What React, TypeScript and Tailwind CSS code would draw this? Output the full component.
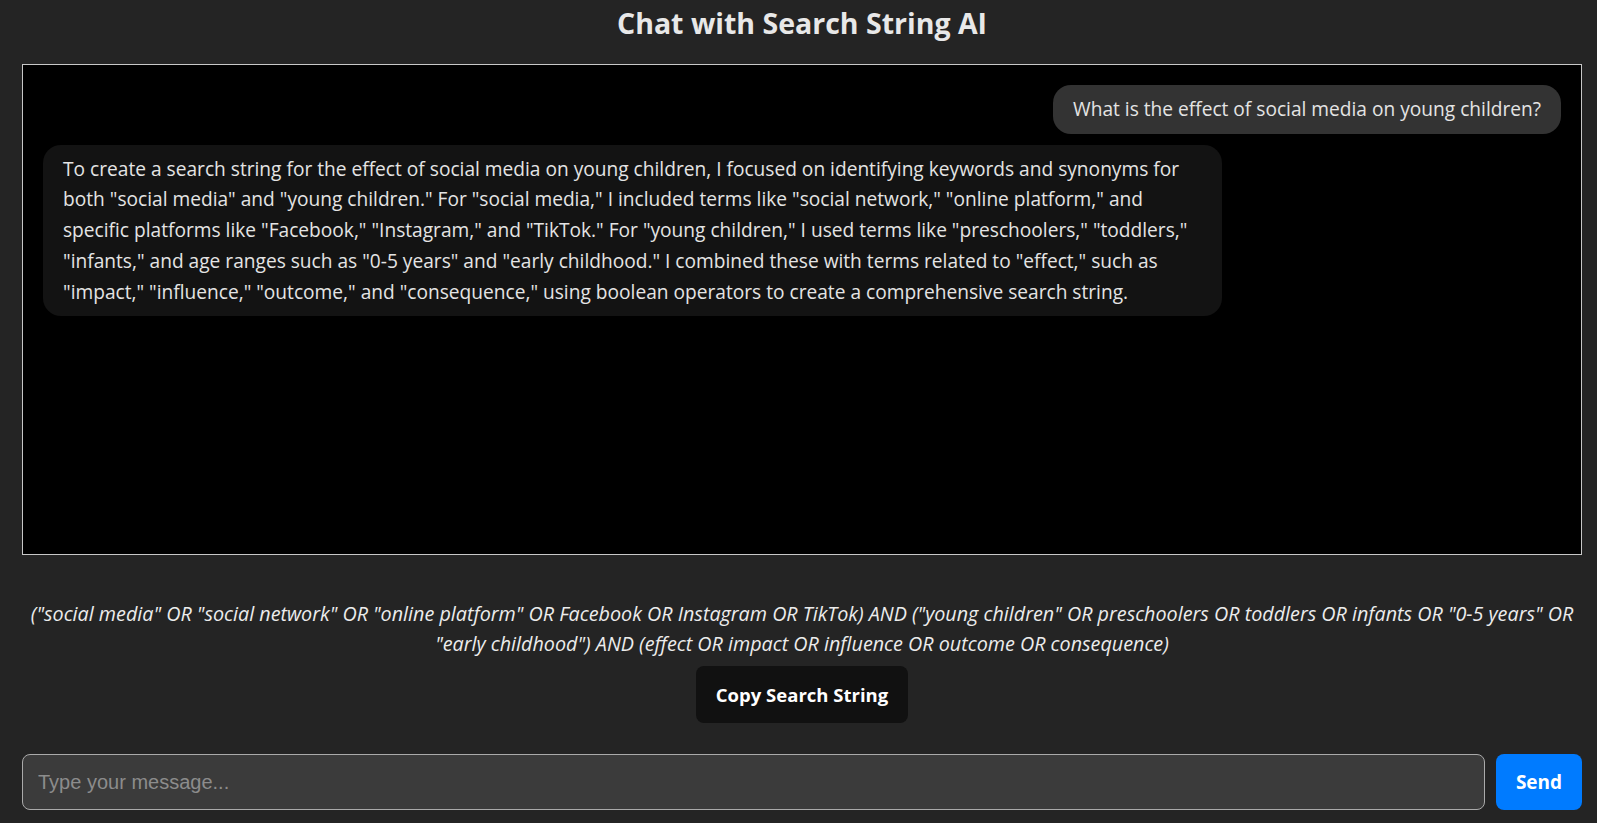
import React, { useState } from 'react';

const USER_MSG = 'What is the effect of social media on young children?';

const BOT_MSG =
  'To create a search string for the effect of social media on young children, I focused on identifying keywords and synonyms for both "social media" and "young children." For "social media," I included terms like "social network," "online platform," and specific platforms like "Facebook," "Instagram," and "TikTok." For "young children," I used terms like "preschoolers," "toddlers," "infants," and age ranges such as "0-5 years" and "early childhood." I combined these with terms related to "effect," such as "impact," "influence," "outcome," and "consequence," using boolean operators to create a comprehensive search string.';

const SEARCH_STRING =
  '("social media" OR "social network" OR "online platform" OR Facebook OR Instagram OR TikTok) AND ("young children" OR preschoolers OR toddlers OR infants OR "0-5 years" OR "early childhood") AND (effect OR impact OR influence OR outcome OR consequence)';

type Message = { role: 'user' | 'assistant'; text: string };

const App: React.FC = () => {
  const [input, setInput] = useState('');
  const [messages] = useState<Message[]>([
    { role: 'user', text: USER_MSG },
    { role: 'assistant', text: BOT_MSG },
  ]);

  return (
    <div className="min-h-screen bg-[#242424] text-[rgba(255,255,255,0.87)] font-['Open_Sans',sans-serif]">
      <div className="ml-[22px] mr-[15px] flex flex-col pt-[5px]">
        <h1 className="mb-[23px] text-center text-[28.5px] font-bold leading-[36px] text-[#e8e8e8]">
          Chat with Search String AI
        </h1>

        {/* Chat window */}
        <div className="flex h-[491px] flex-col gap-[11px] overflow-y-auto border border-[#c8c8c8] bg-black p-5">
          {messages.map((m, i) =>
            m.role === 'user' ? (
              <div
                key={i}
                className="self-end rounded-[18px] bg-[#333333] px-5 py-[9px] text-[19.15px] leading-[30.7px] text-[#e4e4e4]"
              >
                {m.text}
              </div>
            ) : (
              <div
                key={i}
                className="box-content max-w-[75%] self-start rounded-[18px] bg-[#131313] px-5 py-[9px] text-[19.15px] leading-[30.7px] text-[#e4e4e4]"
              >
                {m.text}
              </div>
            )
          )}
        </div>

        {/* Generated search string */}
        <p className="mt-[44px] text-center text-[19.75px] italic leading-[29.6px] text-[#ececec]">
          {SEARCH_STRING}
        </p>

        <button
          onClick={() => navigator.clipboard?.writeText(SEARCH_STRING)}
          className="mx-auto mt-[8px] h-[57px] rounded-lg bg-[#111111] px-5 text-[18.5px] font-bold text-white"
        >
          Copy Search String
        </button>

        {/* Input row */}
        <div className="mt-[31px] flex gap-[11px]">
          <input
            value={input}
            onChange={(e) => setInput(e.target.value)}
            placeholder="Type your message..."
            className="h-[56px] flex-1 rounded-lg border border-[#aaaaaa] bg-[#3b3b3b] px-[15px] font-['Liberation_Sans',Arial,sans-serif] text-[20px] text-white outline-none placeholder:text-[#8c8c8c]"
          />
          <button className="h-[56px] w-[86px] rounded-lg bg-[#007bff] text-[19px] font-bold text-white">
            Send
          </button>
        </div>
      </div>
    </div>
  );
};

export default App;
